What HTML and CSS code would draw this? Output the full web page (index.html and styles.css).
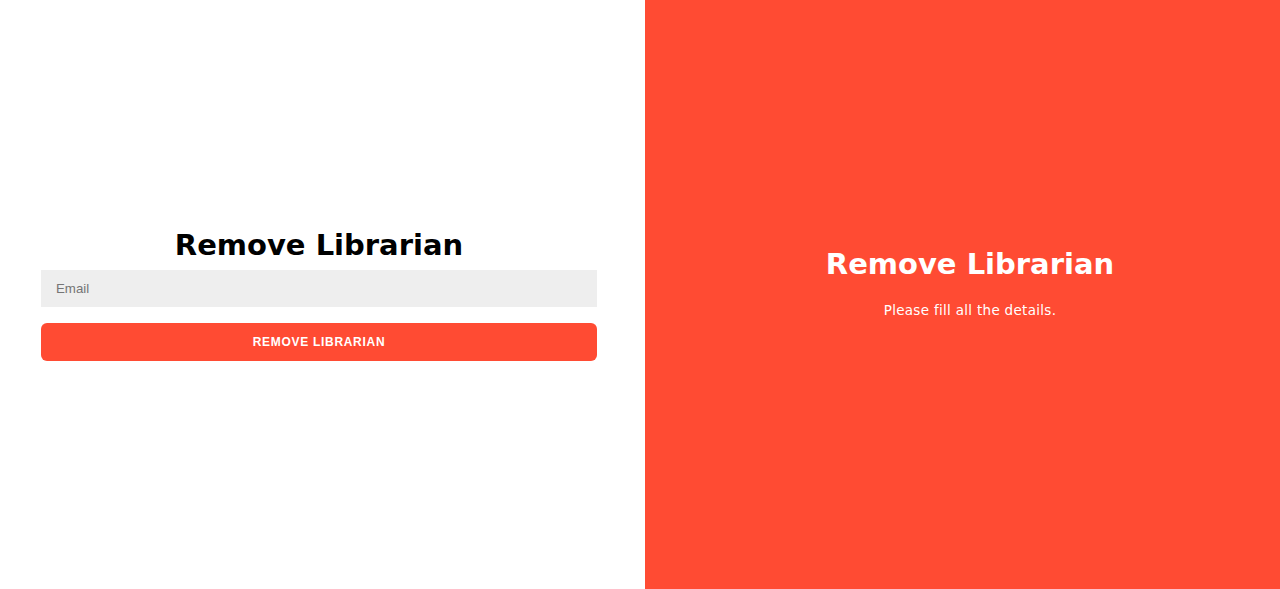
FILE: index.html
```html
<!DOCTYPE html>
<html>
<head>
<meta charset="utf-8">
<link rel="stylesheet" href="styles.css">
</head>
<body>
<div class="page">
  <section class="left">
    <form class="form">
      <h1 class="title">Remove Librarian</h1>
      <input class="input" type="email" placeholder="Email">
      <button class="btn" type="button">Remove Librarian</button>
    </form>
  </section>
  <section class="right">
    <div class="overlay">
      <h1 class="title title-white">Remove Librarian</h1>
      <p class="note">Please fill all the details.</p>
    </div>
  </section>
</div>
</body>
</html>
```

FILE: styles.css
```css
* { box-sizing: border-box; }
html, body { margin: 0; padding: 0; }
body {
  font-family: "DejaVu Sans", "Noto Sans", sans-serif;
  background: #fff;
}
.page {
  display: flex;
  width: 1280px;
  height: 589px;
}
.left {
  width: 645px;
  background: #fff;
  display: flex;
  align-items: center;
  padding-left: 41px;
}
.form {
  width: 556px;
  display: flex;
  flex-direction: column;
  align-items: center;
  margin-top: 0;
}
.title {
  margin: 0;
  font-family: "DejaVu Sans", sans-serif;
  font-weight: 700;
  font-size: 29px;
  line-height: 34px;
  color: #000;
}
.input {
  margin-top: 8px;
  width: 100%;
  height: 37px;
  border: none;
  background: #eee;
  padding: 0 15px;
  font-family: "Liberation Sans", Arial, sans-serif;
  font-size: 13.3px;
  color: #333;
  outline: none;
}
.input::placeholder { color: #757575; }
.btn {
  margin-top: 16px;
  width: 100%;
  height: 38px;
  border: none;
  border-radius: 6px;
  background: #ff4b33;
  color: #fff;
  font-family: "Liberation Sans", Arial, sans-serif;
  font-weight: 700;
  font-size: 12px;
  letter-spacing: 0.7px;
  text-transform: uppercase;
}
.right {
  flex: 1;
  background: #ff4b33;
  display: flex;
  align-items: center;
  justify-content: center;
  padding-left: 15px;
}
.overlay {
  display: flex;
  flex-direction: column;
  align-items: center;
  margin-top: -22px;
}
.title-white { color: #fff; }
.note {
  margin: 19px 0 0;
  font-family: "DejaVu Sans", sans-serif;
  font-size: 13.5px;
  line-height: 20px;
  color: #fff;
  letter-spacing: 0.3px;
}
```
